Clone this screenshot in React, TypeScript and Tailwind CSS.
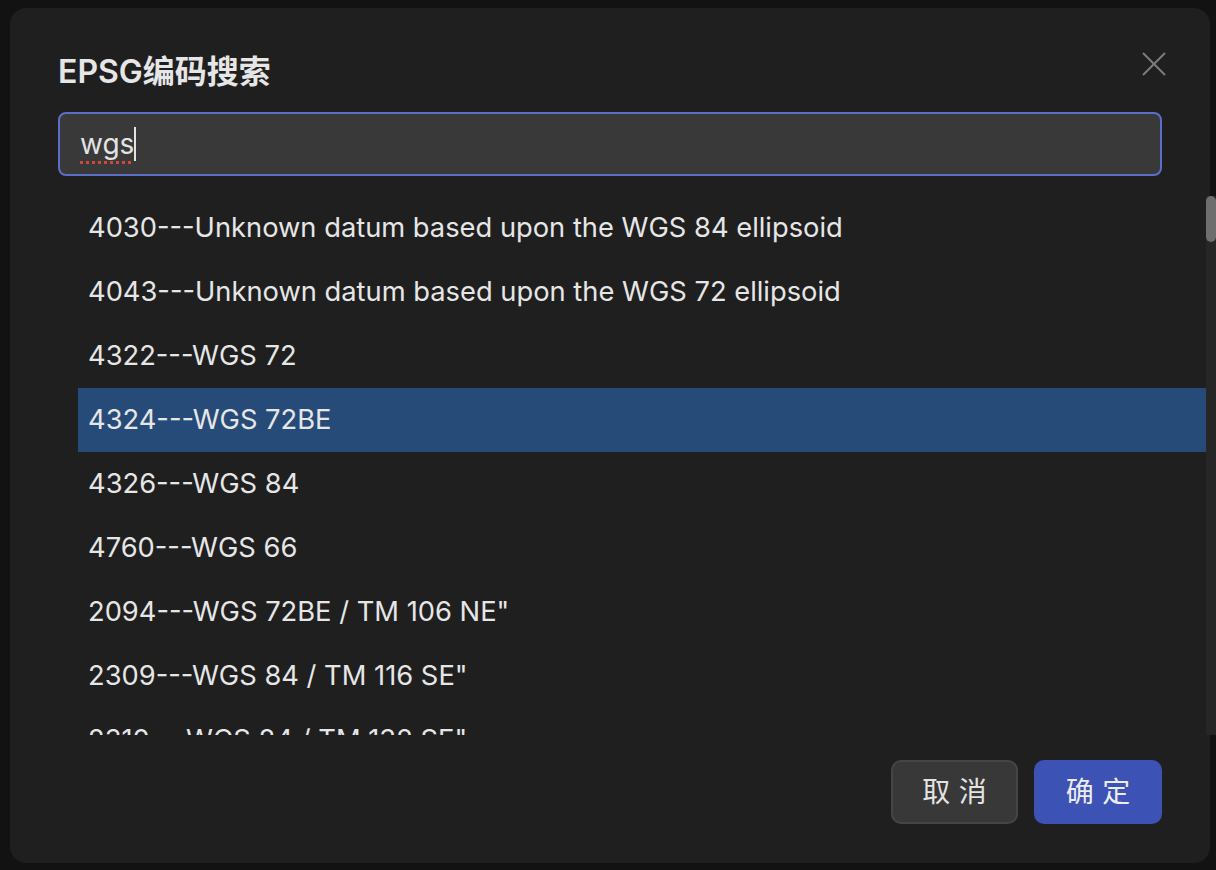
import React from 'react';

const items = [
  '4030---Unknown datum based upon the WGS 84 ellipsoid',
  '4043---Unknown datum based upon the WGS 72 ellipsoid',
  '4322---WGS 72',
  '4324---WGS 72BE',
  '4326---WGS 84',
  '4760---WGS 66',
  '2094---WGS 72BE / TM 106 NE"',
  '2309---WGS 84 / TM 116 SE"',
  '2310---WGS 84 / TM 132 SE"',
];

const font = { fontFamily: 'Inter, "Noto Sans CJK SC", sans-serif' };

const App: React.FC = () => {
  const selected = '4324---WGS 72BE';

  return (
    <div className="w-full h-[870px] overflow-hidden bg-[#121212] pt-[8px] pl-[10px]" style={font}>
      <div className="relative w-[1200px] h-[855px] rounded-[16px] bg-[#1f1f1f] px-[48px] pt-[40px] pb-[39px] flex flex-col">
        {/* close */}
        <button className="absolute top-[44px] right-[44px] w-[24px] h-[24px] text-[#7d7d7d]">
          <svg width="24" height="24" viewBox="0 0 24 24" fill="none" stroke="currentColor" strokeWidth="2">
            <line x1="1" y1="1" x2="23" y2="23" />
            <line x1="23" y1="1" x2="1" y2="23" />
          </svg>
        </button>

        <h2 className="text-[32px] leading-[48px] font-semibold text-[#e6e6e6]">EPSG编码搜索</h2>

        <div className="mt-[16px] h-[64px] rounded-[8px] border-2 border-[#5a6fc8] bg-[#393939] pl-[20px] flex items-center">
          <span className="text-[28px] text-[#e3e3e3] underline decoration-dotted decoration-[#d2463c] decoration-[3px] underline-offset-[7px]">
            wgs
          </span>
          <span className="w-[2px] h-[34px] bg-[#e3e3e3]" />
        </div>

        <div className="mt-[20px] ml-[20px] mr-[-54px] h-[539px] flex overflow-hidden">
          <div className="flex-1 overflow-hidden">
            {items.map((it) => (
              <div
                key={it}
                className={`h-[64px] leading-[64px] pl-[10px] text-[27.3px] whitespace-nowrap text-[#e6e6e6] ${
                  it === selected ? 'bg-[#274b78]' : ''
                }`}
              >
                {it}
              </div>
            ))}
          </div>
          <div className="w-[10px] bg-[#262626]">
            <div className="h-[46px] rounded-full bg-[#6e6e6e]" />
          </div>
        </div>

        <div className="mt-[25px] flex justify-end gap-[16px]">
          <button className="w-[127px] h-[64px] rounded-[10px] border-2 border-[#454545] bg-[#383838] text-[28px] leading-[40px] tracking-[0.3em] pl-[0.3em] text-[#e3e3e3]">
            取消
          </button>
          <button className="w-[128px] h-[64px] rounded-[10px] bg-[#3d52b5] text-[28px] leading-[40px] tracking-[0.3em] pl-[0.3em] text-[#ececec]">
            确定
          </button>
        </div>
      </div>
    </div>
  );
};

export default App;
